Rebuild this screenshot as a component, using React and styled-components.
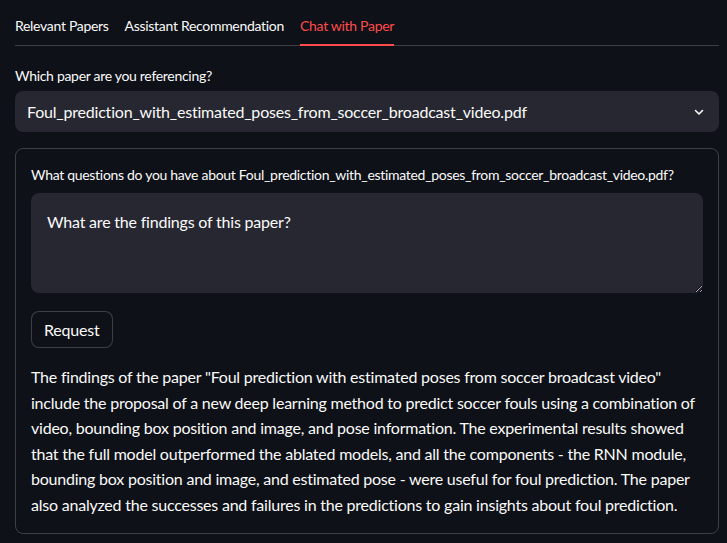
import React from "react";
import styled, { createGlobalStyle } from "styled-components";

const Global = createGlobalStyle`
  html, body { margin: 0; padding: 0; background: #0e1117; }
  body {
    font-family: "Lato", "Noto Sans", sans-serif;
    color: rgb(250, 250, 250);
  }
  * { box-sizing: border-box; }
`;

const Page = styled.div`
  width: 727px;
  min-height: 543px;
  padding: 5px 8px 10px 15px;
  display: flex;
  flex-direction: column;
  background: #0e1117;
  & > * { flex-shrink: 0; }
`;

const TabList = styled.div`
  display: flex;
  gap: 16px;
  height: 41px;
  border-bottom: 1px solid rgba(250, 250, 250, 0.2);
`;

const Tab = styled.div`
  display: flex;
  align-items: center;
  font-size: 14px;
  letter-spacing: -0.3px;
  height: 41px;
  margin-bottom: -1px;
  color: ${(p) => (p.$active ? "rgb(255, 75, 75)" : "rgb(250, 250, 250)")};
  border-bottom: 2px solid ${(p) => (p.$active ? "rgb(255, 75, 75)" : "transparent")};
  padding-top: 1px;
`;

const Label = styled.div`
  font-size: 14px;
  letter-spacing: -0.3px;
  line-height: 20px;
  white-space: nowrap;
  margin-top: ${(p) => p.$top || 0}px;
  margin-bottom: ${(p) => p.$bottom || 0}px;
`;

const Select = styled.div`
  height: 41px;
  border-radius: 8px;
  background: #262730;
  display: flex;
  align-items: center;
  justify-content: space-between;
  padding: 0 14px 0 12px;
  font-size: 16px;
  letter-spacing: -0.2px;
`;

const Card = styled.div`
  margin-top: 16px;
  border: 1px solid rgba(250, 250, 250, 0.2);
  border-radius: 8px;
  padding: 16px 15px 15px 15px;
  display: flex;
  flex-direction: column;
`;

const TextArea = styled.textarea`
  display: block;
  width: 100%;
  height: 100px;
  border: none;
  outline: none;
  border-radius: 8px;
  background: #262730;
  color: rgb(250, 250, 250);
  font-family: inherit;
  font-size: 16px;
  letter-spacing: -0.2px;
  line-height: 25px;
  padding: 16px 16px;
  resize: vertical;
`;

const Button = styled.button`
  align-self: flex-start;
  margin-top: 18px;
  height: 37px;
  padding: 0 12px;
  border-radius: 8px;
  border: 1px solid rgba(250, 250, 250, 0.2);
  background: #0e1117;
  color: rgb(250, 250, 250);
  font-family: inherit;
  font-size: 16px;
  letter-spacing: -0.2px;
`;

const Answer = styled.p`
  margin: 16px 0 0 0;
  font-size: 16px;
  letter-spacing: -0.22px;
  line-height: 25.6px;
`;

const Chevron = () => (
  <svg width="12" height="12" viewBox="0 0 24 24" fill="none" stroke="rgb(250,250,250)" strokeWidth="3.2" strokeLinecap="round" strokeLinejoin="round">
    <path d="M5 9l7 7 7-7" />
  </svg>
);

export default function App() {
  const file = "Foul_prediction_with_estimated_poses_from_soccer_broadcast_video.pdf";
  return (
    <>
      <Global />
      <Page>
        <TabList>
          <Tab>Relevant Papers</Tab>
          <Tab>Assistant Recommendation</Tab>
          <Tab $active>Chat with Paper</Tab>
        </TabList>
        <Label $top={20} $bottom={5}>Which paper are you referencing?</Label>
        <Select>
          <span>{file}</span>
          <Chevron />
        </Select>
        <Card>
          <Label $bottom={8}>What questions do you have about {file}?</Label>
          <TextArea defaultValue="What are the findings of this paper?" />
          <Button>Request</Button>
          <Answer>
            The findings of the paper "Foul prediction with estimated poses from soccer broadcast video" include the proposal of a new deep learning method to predict soccer fouls using a combination of video, bounding box position and image, and pose information. The experimental results showed that the full model outperformed the ablated models, and all the components - the RNN module, bounding box position and image, and estimated pose - were useful for foul prediction. The paper also analyzed the successes and failures in the predictions to gain insights about foul prediction.
          </Answer>
        </Card>
      </Page>
    </>
  );
}
